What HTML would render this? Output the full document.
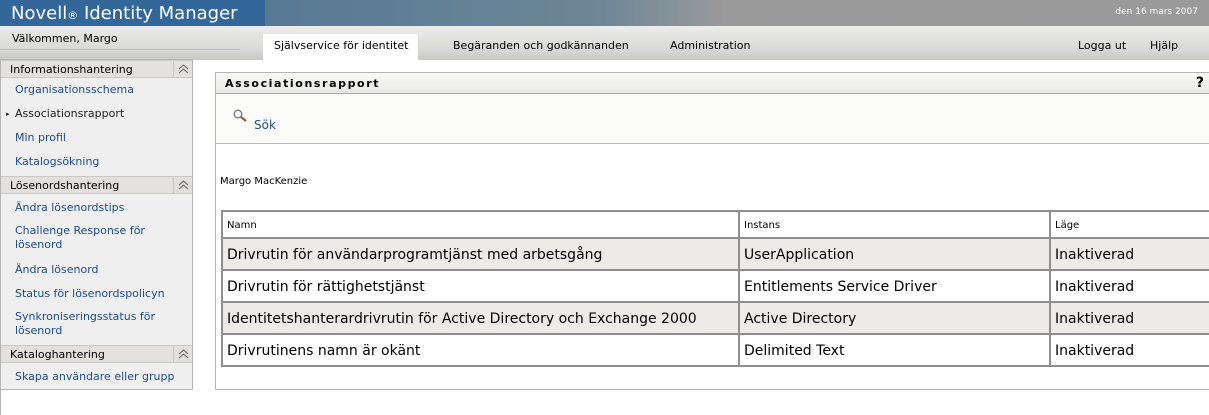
<!DOCTYPE html>
<html><head><meta charset="utf-8"><style>
*{margin:0;padding:0;box-sizing:border-box}
body{width:1209px;height:415px;position:relative;overflow:hidden;background:#fff;font-family:"DejaVu Sans","Liberation Sans",sans-serif;color:#000}
.a{position:absolute;white-space:nowrap}
#top{left:0;top:0;width:1209px;height:26px;background:linear-gradient(90deg,#4a6f8f 0%,#5d7d95 30%,#6e8797 50%,#9a9a9a 60%,#9a9a9a 100%)}
#blue{left:0;top:0;width:265px;height:26px;background:#336699;color:#fff;font-size:18px;padding:3px 0 0 11px}
#nav{left:0;top:26px;width:1209px;height:34px;background:linear-gradient(#ececec,#d8d8d4 70%,#c8c8c4)}
#wel{left:0;top:26px;width:240px;height:24px;background:linear-gradient(#eaeaea,#d9d9d7);font-size:11px;padding:6px 0 0 12px;border-bottom:1px solid #bbb}
.nl{font-size:11px;top:39px}
#tab{left:263px;top:34px;width:155px;height:26px;background:#fff}
#side{left:0;top:59px;width:193px;height:331px;background:#efefef;border:1px solid #b5b5b5}
.sh{position:absolute;left:0;width:191px;height:18px;background:#e2e1dd;border-top:1px solid #c8c8c8;border-bottom:1px solid #c8c8c8;font-size:11px;padding:2px 0 0 9px}
.sh b{position:absolute;left:172px;top:0;width:19px;height:16px;border-left:1px solid #c8c8c8}
.sh b svg{position:absolute;left:4px;top:3px}
.si{position:absolute;left:14px;font-size:11px;color:#1f4e8c;line-height:14px}
#panel{left:215px;top:72px;width:1000px;height:318px;border:1px solid #b5b5b5;background:#fff}
#ph{left:0;top:0;width:1000px;height:21px;background:linear-gradient(#fafafa,#e8e8e6);border-bottom:1px solid #aaa;font-size:11px;font-weight:bold;letter-spacing:1.6px;padding:4px 0 0 9px}
#srch{left:0;top:22px;width:1000px;height:49px;background:#fbfbf9;border-bottom:1px solid #bbb}
table{position:absolute;left:221px;top:210px;border-collapse:collapse;width:1000px}
td{border:2px solid #8f8f8f;padding:1px 0 0 4px;font-size:14px;height:32px}
tr.h td{font-size:10px;height:27px;background:#fff}
tr.g td{background:#ecebe8}
</style></head><body>
<div class="a" id="top"></div>
<div class="a" id="blue">Novell<span style="font-size:11px">®</span> Identity Manager</div>
<div class="a" style="right:11px;top:7px;font-size:9px;color:#fff">den 16 mars 2007</div>
<div class="a" id="nav"></div>
<div class="a" id="wel">Välkommen, Margo</div>
<div class="a" id="tab"></div>
<div class="a nl" style="left:274px">Självservice för identitet</div>
<div class="a nl" style="left:453px">Begäranden och godkännanden</div>
<div class="a nl" style="left:670px">Administration</div>
<div class="a nl" style="left:1078px">Logga ut</div>
<div class="a nl" style="left:1150px">Hjälp</div>
<div class="a" style="left:0;top:60px;width:1px;height:355px;background:#b5b5b5"></div>
<div class="a" id="side">
<div class="sh" style="top:0">Informationshantering<b><svg width="11" height="10"><path d="M1 5L5.5 1L10 5M1 9L5.5 5L10 9" fill="none" stroke="#777" stroke-width="1.2"/></svg></b></div>
<div class="si" style="top:23px">Organisationsschema</div>
<div class="si" style="top:47px;color:#222"><span style="position:absolute;left:-9px;font-size:7px">▸</span>Associationsrapport</div>
<div class="si" style="top:71px">Min profil</div>
<div class="si" style="top:95px">Katalogsökning</div>
<div class="sh" style="top:116px">Lösenordshantering<b><svg width="11" height="10"><path d="M1 5L5.5 1L10 5M1 9L5.5 5L10 9" fill="none" stroke="#777" stroke-width="1.2"/></svg></b></div>
<div class="si" style="top:141px">Ändra lösenordstips</div>
<div class="si" style="top:164px">Challenge Response för<br>lösenord</div>
<div class="si" style="top:203px">Ändra lösenord</div>
<div class="si" style="top:227px">Status för lösenordspolicyn</div>
<div class="si" style="top:250px">Synkroniseringsstatus för<br>lösenord</div>
<div class="sh" style="top:285px">Kataloghantering<b><svg width="11" height="10"><path d="M1 5L5.5 1L10 5M1 9L5.5 5L10 9" fill="none" stroke="#777" stroke-width="1.2"/></svg></b></div>
<div class="si" style="top:310px">Skapa användare eller grupp</div>
</div>
<div class="a" id="panel">
<div class="a" id="ph">Associationsrapport</div>
<div class="a" style="right:10px;top:2px;font-size:14px;font-weight:bold">?</div>
<div class="a" id="srch">
<svg class="a" style="left:17px;top:14px" width="16" height="14"><circle cx="5" cy="5" r="3.8" fill="#eef3f8" stroke="#777" stroke-width="1.3"/><line x1="8" y1="8" x2="13" y2="12" stroke="#a05a20" stroke-width="2.2"/></svg>
<div class="a" style="left:38px;top:23px;font-size:12px;color:#1f4e8c">Sök</div>
</div>
<div class="a" style="left:4px;top:103px;font-size:10px">Margo MacKenzie</div>
</div>
<table>
<col style="width:517px"><col style="width:311px"><col>
<tr class="h"><td>Namn</td><td>Instans</td><td>Läge</td></tr>
<tr class="g"><td>Drivrutin för användarprogramtjänst med arbetsgång</td><td>UserApplication</td><td>Inaktiverad</td></tr>
<tr><td>Drivrutin för rättighetstjänst</td><td>Entitlements Service Driver</td><td>Inaktiverad</td></tr>
<tr class="g"><td>Identitetshanterardrivrutin för Active Directory och Exchange 2000</td><td>Active Directory</td><td>Inaktiverad</td></tr>
<tr><td>Drivrutinens namn är okänt</td><td>Delimited Text</td><td>Inaktiverad</td></tr>
</table>
</body></html>
